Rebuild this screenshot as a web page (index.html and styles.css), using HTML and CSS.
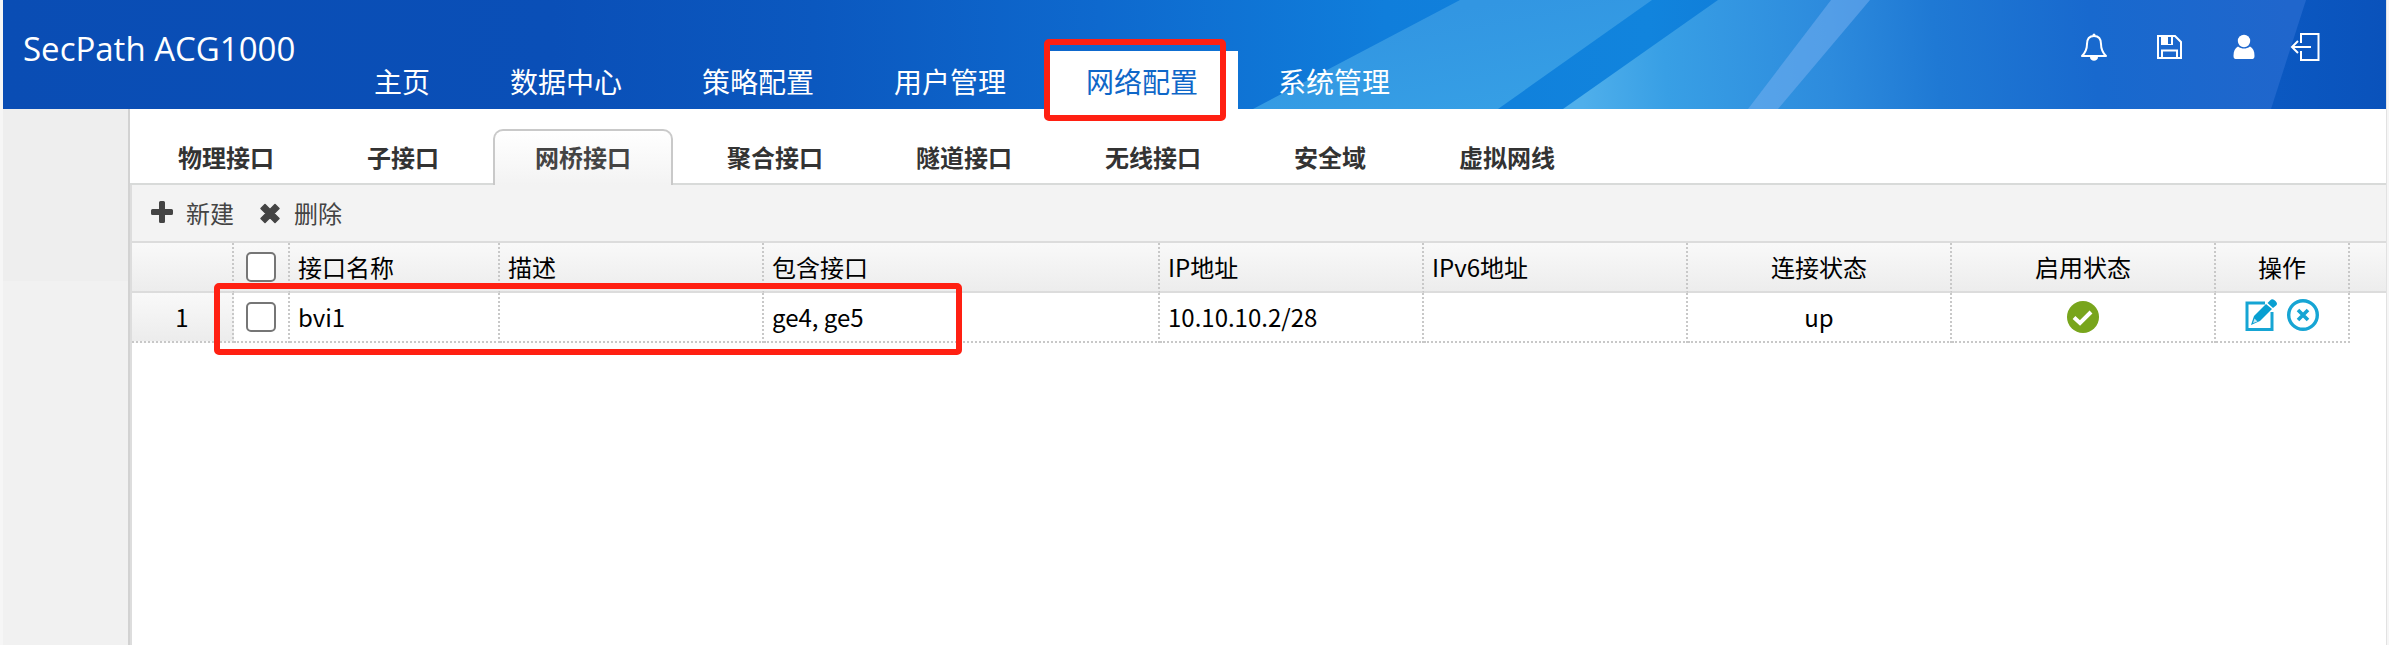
FILE: index.html
```html
<!DOCTYPE html>
<html lang="zh-CN">
<head>
<meta charset="utf-8">
<title>SecPath ACG1000</title>
<link rel="stylesheet" href="styles.css">
</head>
<body>
<div class="app">
  <header class="header">
    <svg class="header-art" viewBox="0 0 2383 109" preserveAspectRatio="none" aria-hidden="true">
      <defs>
        <linearGradient id="base" gradientUnits="userSpaceOnUse" x1="0" y1="0" x2="2383" y2="0">
          <stop offset="0" stop-color="#0a4db4"/>
          <stop offset=".23" stop-color="#0a4fb7"/>
          <stop offset=".34" stop-color="#0b58bf"/>
          <stop offset=".46" stop-color="#0e69ce"/>
          <stop offset=".58" stop-color="#107edb"/>
          <stop offset=".69" stop-color="#1184dd"/>
          <stop offset=".94" stop-color="#0b5ac3"/>
          <stop offset="1" stop-color="#0a52bb"/>
        </linearGradient>
        <linearGradient id="band" gradientUnits="userSpaceOnUse" x1="1500" y1="0" x2="1520" y2="109">
          <stop offset="0" stop-color="#3296e2"/>
          <stop offset="1" stop-color="#369fe5"/>
        </linearGradient>
        <linearGradient id="glow" gradientUnits="userSpaceOnUse" x1="1580" y1="109" x2="2290" y2="40">
          <stop offset="0" stop-color="#4fafeb"/>
          <stop offset=".12" stop-color="#389fe5"/>
          <stop offset=".35" stop-color="#2d8bdd"/>
          <stop offset=".5" stop-color="#1f79d4"/>
          <stop offset=".72" stop-color="#1869ce"/>
          <stop offset="1" stop-color="#2066cc"/>
        </linearGradient>
      </defs>
      <rect width="2383" height="109" fill="url(#base)"/>
      <path d="M1457 0H1649L1495 109H1250Z" fill="url(#band)"/>
      <path d="M1715 0H2303L2268 109H1560Z" fill="url(#glow)"/>
      <path d="M1828 0H1867L1775 109H1745Z" fill="#7ab2f2" fill-opacity=".5"/>
    </svg>
    <h1 class="brand">SecPath ACG1000</h1>
    <nav class="main-nav">
      <a class="main-link" href="#">主页</a>
      <a class="main-link" href="#">数据中心</a>
      <a class="main-link" href="#">策略配置</a>
      <a class="main-link" href="#">用户管理</a>
      <a class="main-link active" href="#">网络配置<span class="marker nav-marker"></span></a>
      <a class="main-link" href="#">系统管理</a>
    </nav>
    <div class="tools">
      <div class="tool-group">
        <button class="tool" aria-label="告警"><svg width="30" height="30" viewBox="0 0 30 30" fill="none" stroke="#fff" stroke-width="2"><path d="M15 4C9.500 4 8 8 8 12C8 18 6 21 3 24H27C24 21 22 18 22 12C22 8 20.500 4 15 4Z" stroke-linejoin="round"/><circle cx="15" cy="3" r="1.500" fill="#fff" stroke="none"/><path d="M11 25H19C19 30 11 30 11 25Z" fill="#fff" stroke="none"/></svg></button>
        <button class="tool" aria-label="保存"><svg width="30" height="30" viewBox="0 0 30 30" fill="none" stroke="#fff" stroke-width="2"><path d="M4 4H21L27 10V26H4Z"/><path d="M8 26V18.500H23V26"/><path d="M7 4H19V13H7Z" fill="#fff" stroke="none"/><path d="M14 5H17V12H14Z" fill="#1866cb" stroke="none"/></svg></button>
        <button class="tool" aria-label="用户"><svg width="30" height="30" viewBox="0 0 30 30" fill="#fff"><circle cx="15" cy="9" r="6.200"/><path d="M9 14.500C13 17.300 17 17.300 21 14.500C24 16 25.500 19 25.500 24C25.500 26.500 24.500 27 22 27H8C5.500 27 4.500 26.500 4.500 24C4.500 19 6 16 9 14.500Z"/></svg></button>
      </div>
      <button class="tool" aria-label="退出"><svg width="30" height="30" viewBox="0 0 30 30" fill="none" stroke="#fff" stroke-width="2"><path d="M11 11V2H28.500V28H11V19"/><path d="M21 15H2M8 9L2 15L8 21"/></svg></button>
    </div>
  </header>
  <div class="body">
    <aside class="sidebar"><div class="sidebar-top"></div></aside>
    <main class="content">
      <nav class="tabs">
        <a class="tab" href="#">物理接口</a>
        <a class="tab" href="#">子接口</a>
        <a class="tab current" href="#">网桥接口</a>
        <a class="tab" href="#">聚合接口</a>
        <a class="tab" href="#">隧道接口</a>
        <a class="tab" href="#">无线接口</a>
        <a class="tab" href="#">安全域</a>
        <a class="tab" href="#">虚拟网线</a>
      </nav>
      <div class="panel">
        <div class="toolbar">
          <button class="action"><svg width="24" height="24" viewBox="0 0 24 24" fill="#444"><path d="M10.500 1H13.500Q15 1 15 2.500V9H21.500Q23 9 23 10.500V13.500Q23 15 21.500 15H15V21.500Q15 23 13.500 23H10.500Q9 23 9 21.500V15H2.500Q1 15 1 13.500V10.500Q1 9 2.500 9H9V2.500Q9 1 10.500 1Z"/></svg>新建</button>
          <button class="action"><svg width="24" height="24" viewBox="0 0 24 24" fill="#444" stroke="#444" stroke-width="1.500" stroke-linejoin="round"><path d="M7 4.500L12 9.500L17 4.500L21 8.500L16 13.500L21 18.500L17 22.500L12 17.500L7 22.500L3 18.500L8 13.500L3 8.500Z"/></svg>删除</button>
        </div>
        <div class="grid-wrap">
          <table class="grid">
            <colgroup><col class="c-num"><col class="c-check"><col class="c-name"><col class="c-mid"><col class="c-wide"><col class="c-mid"><col class="c-mid"><col class="c-mid"><col class="c-mid"><col class="c-ops"><col></colgroup>
            <thead>
              <tr>
                <th></th>
                <th class="center"><input class="check" type="checkbox" aria-label="全选"></th>
                <th>接口名称</th><th>描述</th><th>包含接口</th><th>IP地址</th><th>IPv6地址</th>
                <th class="center">连接状态</th><th class="center">启用状态</th><th class="center">操作</th><th class="filler"></th>
              </tr>
            </thead>
            <tbody>
              <tr>
                <td class="center num">1</td>
                <td class="center"><input class="check" type="checkbox" aria-label="选择 bvi1"></td>
                <td>bvi1</td><td></td><td>ge4, ge5</td><td>10.10.10.2/28</td><td></td>
                <td class="center">up</td>
                <td class="center"><svg class="icon" width="32" height="32" viewBox="0 0 32 32"><circle cx="16" cy="16" r="16" fill="#78a51c"/><path d="M7 16.500L13 22L24 11" fill="none" stroke="#fff" stroke-width="4"/></svg></td>
                <td class="center">
                  <div class="ops">
                    <button class="op" aria-label="编辑"><svg width="34" height="34" viewBox="0 0 34 34"><path d="M21 5H3V31.500H28V14" fill="none" stroke="#16a5d4" stroke-width="3"/><path d="M7 27L10 18L22 6L28 11L16 23Z" fill="#089fd1"/><path d="M23.500 5L26 2.500Q28.500 0 31.500 3T31.500 8L29 10Z" fill="#089fd1"/><path d="M9 25L10.500 20.500L13.500 23.500Z" fill="#bfe6f3"/></svg></button>
                    <button class="op" aria-label="删除"><svg width="34" height="34" viewBox="0 0 34 34" fill="none" stroke="#16a5d4"><circle cx="17" cy="17" r="14.300" stroke-width="3.400"/><path d="M12 12L22 22M22 12L12 22" stroke-width="3.600"/></svg></button>
                  </div>
                </td>
                <td class="filler"></td>
              </tr>
            </tbody>
          </table>
          <span class="marker row-marker"></span>
        </div>
      </div>
    </main>
  </div>
</div>
</body>
</html>
```
FILE: styles.css
```css
* { box-sizing: border-box; }

body {
  margin: 0;
  background: #f6f6f6;
  color: #000;
  font: 24px/36px "Noto Sans CJK SC", sans-serif;
}

button {
  padding: 0;
  border: 0;
  background: none;
  font: inherit;
  color: inherit;
}

a { color: inherit; text-decoration: none; }
svg { display: block; }

.app {
  display: flex;
  flex-direction: column;
  min-height: 100vh;
  margin: 0 3px;
  box-shadow: 1px 0 0 #e2e2e2;
}

.header {
  position: relative;
  display: flex;
  height: 109px;
  color: #fff;
}

.header-art {
  position: absolute;
  inset: 0;
  width: 100%;
  height: 100%;
}

.brand {
  position: relative;
  width: 331px;
  margin: 0;
  padding: 25px 0 0 20px;
  font: 33px/48px "Open Sans", sans-serif;
  white-space: nowrap;
}

.main-nav {
  position: relative;
  z-index: 2;
  display: flex;
  align-items: flex-end;
}

.main-link {
  position: relative;
  height: 58px;
  padding: 0 40px;
  font-size: 28px;
  line-height: 60px;
  white-space: nowrap;
}

.main-link.active { background: #fff; color: #0e67c8; }

.marker {
  position: absolute;
  border: 6px solid #ff2012;
  border-radius: 5px;
  pointer-events: none;
}

.nav-marker { inset: -12px 12px -12px -2px; }

.tools {
  position: relative;
  display: flex;
  gap: 31px;
  margin: 32px 66px 0 auto;
}

.tool-group { display: flex; gap: 45px; }
.tool { height: 30px; }

.body { display: flex; flex: 1; }

.sidebar {
  flex: none;
  width: 127px;
  background: #f1f1f1;
  border-right: 2px solid #d2d2d2;
}

.sidebar-top { height: 172px; background: #eee; }

.content {
  display: flex;
  flex: 1;
  flex-direction: column;
  min-width: 0;
  background: #fff;
}

.tabs {
  display: flex;
  gap: 9px;
  padding: 20px 6px 0;
  border-bottom: 2px solid #d8dad9;
}

.tab {
  height: 54px;
  padding: 0 42px;
  color: #333;
  font-weight: bold;
  line-height: 56px;
  white-space: nowrap;
}

.tab.current {
  height: 56px;
  margin: 0 3px -2px;
  padding: 0 40px;
  border: 2px solid #c9c9c9;
  border-bottom: 0;
  border-radius: 10px 10px 0 0;
  background: linear-gradient(#fff, #f3f3f3);
  color: #444;
  line-height: 52px;
}

.panel {
  flex: 1;
  border-left: 2px solid #ddd;
}

.toolbar {
  display: flex;
  gap: 24px;
  padding: 10px 18px;
  background: #f3f3f3;
  border-bottom: 2px solid #dcdcdc;
  color: #444;
}

.action {
  display: flex;
  gap: 12px;
  height: 36px;
}

.action svg { margin-top: 5px; }

.grid-wrap { position: relative; }

.grid {
  width: 100%;
  table-layout: fixed;
  border-collapse: separate;
  border-spacing: 0;
}

.c-num { width: 102px; }
.c-check { width: 56px; }
.c-name { width: 210px; }
.c-mid { width: 264px; }
.c-wide { width: 396px; }
.c-ops { width: 134px; }

th, td {
  height: 50px;
  padding: 0 8px;
  border-right: 2px dotted #c8c8c8;
  border-bottom: 2px dotted #c8c8c8;
  text-align: left;
  font-weight: normal;
}

thead tr, .num { background: linear-gradient(#f9f9f9, #ececec); }
th { border-bottom: 2px solid #dcdcdc; }
.center { text-align: center; }
th.filler { border-right: 0; }
td.filler { border: 0; }

.check {
  display: block;
  appearance: none;
  width: 30px;
  height: 30px;
  margin: 0 auto;
  border: 2px solid #767676;
  border-radius: 5px;
  background: #fff;
}

.check:checked { background: #0e67c8; }
.icon { margin: 0 auto; }

.ops {
  display: flex;
  gap: 8px;
  justify-content: center;
  margin-top: -4px;
}

.op { height: 34px; }

.row-marker {
  top: 40px;
  left: 82px;
  width: 748px;
  height: 72px;
}
```
